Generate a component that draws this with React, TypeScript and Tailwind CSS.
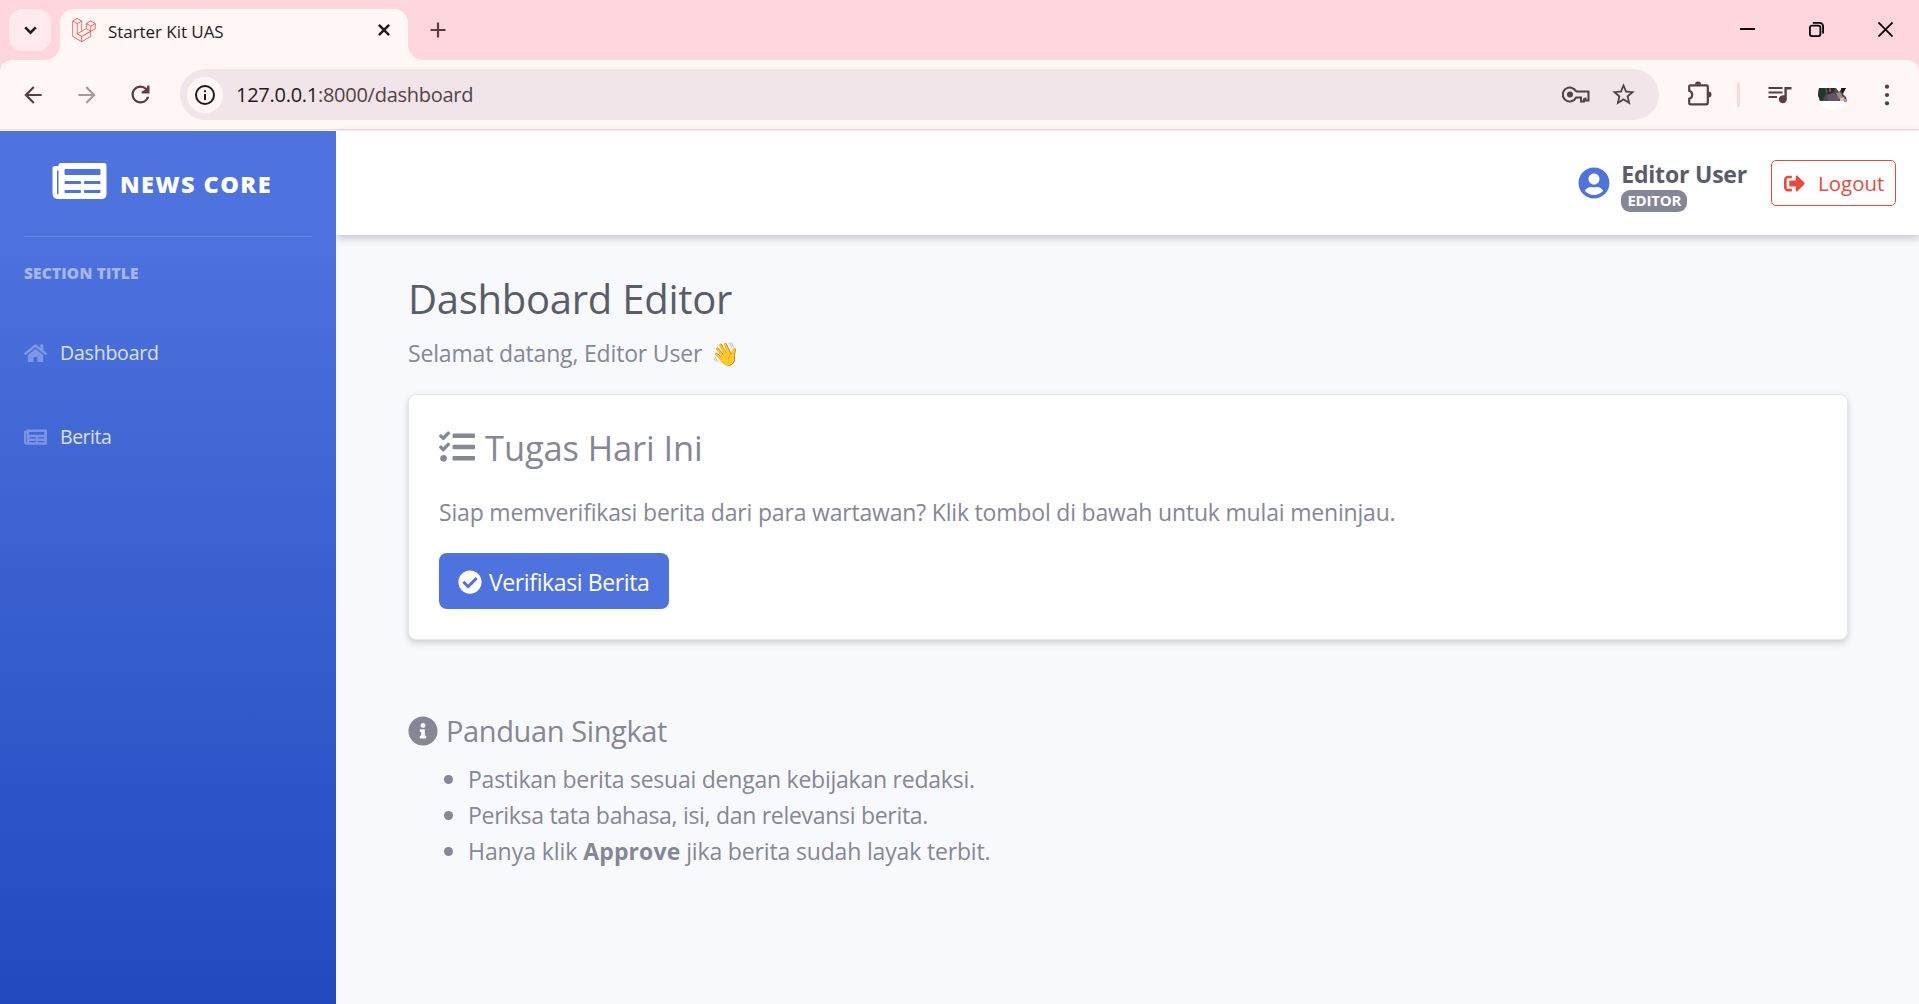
import React from 'react';
import {
  FaCheckCircle,
  FaHome,
  FaInfoCircle,
  FaNewspaper,
  FaSignOutAlt,
  FaTasks,
  FaUserCircle,
} from 'react-icons/fa';
import { SiLaravel } from 'react-icons/si';

function TabStrip() {
  return (
    <div className="flex h-[60px] bg-[#ffd6de] pl-[9px]">
      <button className="mt-[9px] grid size-[42px] place-items-center rounded-[14px] bg-[#ffebee] text-[#1f1a1b]">
        <svg width="13" height="9" viewBox="0 0 13 9" fill="none" stroke="currentColor" strokeWidth="2.6">
          <path d="M1.2 1.4l5.3 5.2 5.3-5.2" />
        </svg>
      </button>
      <div className="relative ml-[9px] mt-[9px] flex h-[51px] w-[348px] items-start rounded-t-[14px] bg-[#fff7f5] pl-3">
        <svg className="absolute -left-[15px] bottom-0 text-[#fff7f5]" width="15" height="15" viewBox="0 0 15 15" fill="currentColor">
          <path d="M15 0v15H0A15 15 0 0 0 15 0z" />
        </svg>
        <svg className="absolute -right-[15px] bottom-0 text-[#fff7f5]" width="15" height="15" viewBox="0 0 15 15" fill="currentColor">
          <path d="M0 0v15h15A15 15 0 0 1 0 0z" />
        </svg>
        <SiLaravel className="mt-[9px] size-6 text-[#fb4438]" />
        <span className="ml-3 flex h-[45px] items-center text-[17px] tracking-[-0.05px] text-[#1f1a1b]">Starter Kit UAS</span>
        <svg className="ml-auto mr-[18px] mt-[15px] text-[#1f1a1b]" width="12" height="12" viewBox="0 0 12 12" stroke="currentColor" strokeWidth="2.5">
          <path d="M.9.9l10.2 10.2M11.1.9L.9 11.1" />
        </svg>
      </div>
      <svg className="ml-[22px] mt-[22px] text-[#5a3d43]" width="16" height="16" viewBox="0 0 16 16" stroke="currentColor" strokeWidth="2.2">
        <path d="M8 .5v15M.5 8h15" />
      </svg>
      <div className="ml-auto mr-[26px] mt-[22px] flex gap-[54px] text-black">
        <svg width="15" height="15" viewBox="0 0 15 15" stroke="currentColor" strokeWidth="2">
          <path d="M0 7h15" />
        </svg>
        <svg width="15" height="15" viewBox="0 0 15 15" fill="none" stroke="currentColor" strokeWidth="1.8">
          <rect x=".9" y="3.6" width="10.5" height="10.5" rx="2" />
          <path d="M3.8.9H10.500a3.600 3.600 0 0 1 3.600 3.600V11.500" />
        </svg>
        <svg width="15" height="15" viewBox="0 0 15 15" stroke="currentColor" strokeWidth="1.8">
          <path d="M.5.5l14 14M14.500.5l-14 14" />
        </svg>
      </div>
    </div>
  );
}

function Toolbar() {
  return (
    <div className="bg-[#ffd6de]">
      <div className="flex h-[71px] items-start rounded-t-[12px] bg-[#fff7f5]">
        <div className="flex h-[70px] w-full items-center border-b border-[#f3dde0] pl-5 text-[#5a3d43]">
          <svg width="26" height="26" viewBox="0 0 24 24" fill="currentColor">
            <path d="M20 11H7.830l5.590-5.590L12 4l-8 8 8 8 1.410-1.410L7.830 13H20v-2z" />
          </svg>
          <svg className="ml-7 text-[#aa9a9c]" width="26" height="26" viewBox="0 0 24 24" fill="currentColor">
            <path d="M4 13h12.170l-5.590 5.590L12 20l8-8-8-8-1.410 1.410L16.170 11H4v2z" />
          </svg>
          <svg className="ml-[27px]" width="27" height="27" viewBox="0 0 24 24" fill="currentColor">
            <path d="M17.65 6.35A7.958 7.958 0 0 0 12 4c-4.42 0-7.99 3.58-7.99 8s3.57 8 7.99 8c3.73 0 6.84-2.55 7.73-6h-2.08A5.990 5.990 0 0 1 12 18c-3.31 0-6-2.69-6-6s2.69-6 6-6c1.660 0 3.140.690 4.220 1.780L13 9.300V11h7V4h-2z" />
          </svg>
          <div className="ml-[26px] flex h-[51px] w-[1479px] items-center rounded-full bg-[#f1e5e9] pl-[7px]">
            <span className="grid size-9 place-items-center rounded-full bg-[#fff7f5] text-[#1f1a1b]">
              <svg width="20" height="20" viewBox="0 0 20 20" fill="none" stroke="currentColor" strokeWidth="2">
                <circle cx="10" cy="10" r="9" />
                <path d="M10 9v6M10 5.200v2" />
              </svg>
            </span>
            <span className="ml-[13px] text-[20px] tracking-[-0.27px] text-[#1f1a1b]">
              127.0.0.1<span className="text-[#514347]">:8000/dashboard</span>
            </span>
            <div className="ml-auto flex items-center text-[#4d4246]">
              <svg width="28" height="17" viewBox="0 0 28 17" fill="none" stroke="currentColor" strokeWidth="2">
                <path d="M14.100 5.500A7 7 0 1 0 14.100 11.500H19v4h3v-3.300M14.100 5.500H26.500v9h-3v-3" />
                <circle cx="8" cy="8.500" r="3" fill="currentColor" stroke="none" />
              </svg>
              <svg className="ml-5" width="27" height="27" viewBox="0 0 24 24" fill="currentColor">
                <path d="M22 9.240l-7.190-.620L12 2 9.190 8.630 2 9.240l5.460 4.730L5.820 21 12 17.270 18.180 21l-1.630-7.030L22 9.240zM12 15.400l-3.760 2.270 1-4.280-3.320-2.880 4.380-.380L12 6.100l1.710 4.040 4.380.380-3.320 2.880 1 4.280L12 15.400z" />
              </svg>
              <span className="w-[22px]" />
            </div>
          </div>
          <svg className="ml-[28px] -mt-[3px]" width="26" height="26" viewBox="0 0 26 26" fill="none" stroke="currentColor" strokeWidth="2.200">
            <path d="M3.200 5.300H19.500q1.300 0 1.300 1.300V23q0 1.300-1.300 1.300H3.200q-1 0-1-1V18.800q3-.900 3-4t-3-4V6.300q0-1 1-1z" />
            <path d="M8 4.500a3 3 0 0 1 6 0zM21.500 11.500a3 3 0 0 1 0 6z" fill="currentColor" stroke="none" />
          </svg>
          <span className="ml-[24px] h-[25px] w-[3px] rounded-full bg-[#ffd6de]" />
          <svg className="ml-7" width="24" height="18" viewBox="0 0 24 18" fill="currentColor">
            <path d="M.5 1h14v2H.5zM.5 5.500h14v2H.5zM.5 10H9v2H.5zM16 1h7.500v2.400H18.800V13a4 4 0 1 1-2.400-3.400V1z" />
          </svg>
          <span className="ml-[26px] grid size-[30px] place-items-center rounded-full bg-white">
            <svg width="30" height="16" viewBox="0 0 30 16">
              <path d="M1 1h17l3 4 3-4h4l-3 6 3 3 1 4H2L0 8z" fill="#4c4a50" />
              <path d="M1 1h6l1 6-4 7H2L0 8z" fill="#23372f" />
              <path d="M9 1h8l-2 5-5 2z" fill="#33262f" />
              <path d="M23 1h5l-4 6z" fill="#16151a" />
              <path d="M9 8l6-2 5 3 2 5H10z" fill="#62566b" />
              <path d="M18 6l4-1 3 5-4 2z" fill="#a7867b" />
              <path d="M22 11l4-1 1 4h-5z" fill="#cfc3a8" />
              <path d="M26 12h3v3h-3z" fill="#f06fb4" />
              <path d="M11 1h2v4h-2z" fill="#9a4b2e" />
            </svg>
          </span>
          <svg className="ml-[36px]" width="6" height="22" viewBox="0 0 6 22" fill="currentColor">
            <circle cx="3" cy="2.700" r="2.100" />
            <circle cx="3" cy="11" r="2.100" />
            <circle cx="3" cy="19.300" r="2.100" />
          </svg>
        </div>
      </div>
    </div>
  );
}

function Sidebar() {
  return (
    <aside className="z-10 flex w-[336px] shrink-0 flex-col bg-[linear-gradient(180deg,#4e73df_10%,#224abe_100%)] px-6 text-white">
      <div className="flex h-[105px] items-center pl-7">
        <FaNewspaper className="-mt-[5px] h-12 w-[55px] shrink-0" />
        <span className="ml-[13px] mt-[3px] whitespace-nowrap text-[23.5px] font-extrabold tracking-[1.4px]">NEWS CORE</span>
      </div>
      <hr className="border-t border-white/15" />
      <div className="mt-6 text-[15.5px] font-extrabold leading-6 tracking-[0.16px] text-white/50">SECTION TITLE</div>
      <nav className="mt-[26px] text-[19.5px] text-white/80">
        <a className="flex h-[84px] items-center gap-[13px]">
          <FaHome className="h-[20.4px] w-[23px] text-white/30" />
          <span className="tracking-[-0.21px]">Dashboard</span>
        </a>
        <a className="flex h-[84px] items-center gap-[13px]">
          <FaNewspaper className="h-[20.4px] w-[23px] text-white/30" />
          <span className="tracking-[-0.47px]">Berita</span>
        </a>
      </nav>
    </aside>
  );
}

function Header() {
  return (
    <header className="flex h-[104px] shrink-0 items-center justify-end bg-white pr-[23px] shadow-[0_3px_8px_rgba(58,59,69,0.28)]">
      <FaUserCircle className="size-8 text-[#4e73df]" />
      <div className="ml-[10px] mt-[5px] flex flex-col items-start">
        <span className="ml-px text-[23px] font-bold leading-7 tracking-[-0.2px] text-[#5a5c69]">Editor User</span>
        <span className="ml-px mt-0.5 flex h-[22px] w-[66px] items-center justify-center rounded-[9px] bg-[#858796] text-[15px] font-bold tracking-[-0.22px] text-white">EDITOR</span>
      </div>
      <button className="ml-6 flex h-[46px] w-[125px] items-center rounded-[5px] border border-[#e74a3b] pl-3 text-[20.4px] tracking-[0.06px] text-[#e74a3b]">
        <FaSignOutAlt className="size-[21px]" />
        <span className="ml-[13px]">Logout</span>
      </button>
    </header>
  );
}

function TaskCard() {
  return (
    <section className="mt-[23px] h-[246px] rounded-[8px] border border-[#e3e6f0] bg-white px-[30px] pt-[31px] shadow-[0_3px_6px_rgba(58,59,69,0.22)]">
      <h2 className="flex items-center text-[34.5px] leading-[44px] tracking-[-0.12px]">
        <FaTasks className="-mt-0.5 size-9" />
        <span className="ml-[10px]">Tugas Hari Ini</span>
      </h2>
      <p className="mt-6 text-[23px] leading-9 tracking-[-0.185px]">
        Siap memverifikasi berita dari para wartawan? Klik tombol di bawah untuk mulai meninjau.
      </p>
      <button className="mt-[23px] flex h-14 w-[230px] items-center rounded-[8px] bg-[#4e73df] pl-[19px] text-[23px] tracking-[-0.385px] text-white">
        <FaCheckCircle className="mt-px size-6" />
        <span className="ml-[7px] mt-0.5 whitespace-nowrap">Verifikasi Berita</span>
      </button>
    </section>
  );
}

const Dot = () => <span className="ml-9 mr-[15px] mt-px size-[9px] shrink-0 rounded-full bg-[#858796]" />;

function Guide() {
  return (
    <section className="mt-[73px]">
      <h3 className="flex items-center text-[29px] leading-9 tracking-[-0.385px]">
        <FaInfoCircle className="-mt-px size-[30px]" />
        <span className="ml-2">Panduan Singkat</span>
      </h3>
      <ul className="mt-3 text-[23px] leading-9">
        <li className="flex items-center">
          <Dot />
          <span className="tracking-[-0.235px]">Pastikan berita sesuai dengan kebijakan redaksi.</span>
        </li>
        <li className="flex items-center">
          <Dot />
          <span className="tracking-[-0.295px]">Periksa tata bahasa, isi, dan relevansi berita.</span>
        </li>
        <li className="flex items-center">
          <Dot />
          <span className="tracking-[-0.16px]">
            <span className="tracking-[-0.06px]">Hanya klik </span>
            <b className="tracking-[0.12px]">Approve</b> jika berita sudah layak terbit.
          </span>
        </li>
      </ul>
    </section>
  );
}

export default function App() {
  return (
    <div className="flex h-screen flex-col overflow-hidden font-['Open_Sans',sans-serif]">
      <TabStrip />
      <Toolbar />
      <div className="flex min-h-0 flex-1">
        <Sidebar />
        <div className="flex min-w-0 flex-1 flex-col bg-[#f8f9fc] text-[#858796]">
          <Header />
          <main className="pl-[72px] pr-[71px] pt-[39px]">
            <h1 className="text-[40px] leading-[50px] tracking-[-0.26px] text-[#5a5c69]">Dashboard Editor</h1>
            <p className="mt-[11px] h-9 text-[23px] leading-9 tracking-[-0.17px]">
              Selamat datang, Editor User <span className="ml-[3px] text-[23px]">👋</span>
            </p>
            <TaskCard />
            <Guide />
          </main>
        </div>
      </div>
    </div>
  );
}
